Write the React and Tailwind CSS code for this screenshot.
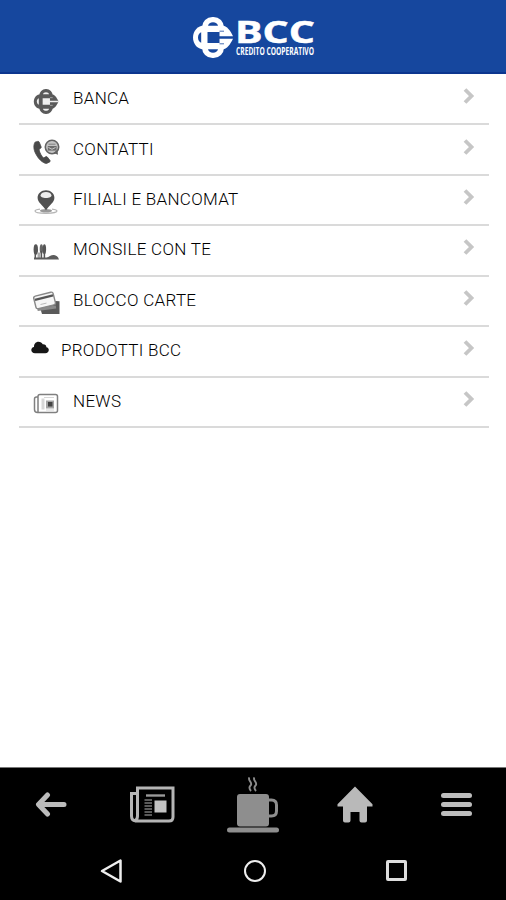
import React from 'react';

// Four-lobed knot, the right lobe is cut open like a "C"
const Knot = ({ className, color, gap }) => (
  <svg className={className} viewBox="0 0 40 41" fill="none">
    <rect x="9" y="0" width="22" height="41" rx="10.500" fill={color} />
    <path d="M11 8.500h18c5 0 8.500 5.500 11 10.700v2.600c-2.500 5.200-6 10.700-11 10.700H11c-6 0-11-5-11-12s5-12 11-12z" fill={color} />
    {/* holes of the lobes */}
    <path d="M15 8.800c.5-2.300 2.400-3.500 5-3.500s4.500 1.200 5 3.500z" fill={gap} />
    <path d="M15 32.200c.5 2.300 2.400 3.500 5 3.500s4.500-1.200 5-3.500z" fill={gap} />
    <path d="M8.200 15.300C6.200 16 5 18 5 20.500s1.200 4.500 3.200 5.200z" fill={gap} />
    <path d="M26.500 14.200h4.500M26.500 26.800h4.500" stroke={gap} strokeWidth=".8" />
    <path d="M14.500 15h12v4.300h13.500v2.400H26.500V26h-12z" fill={gap} />
  </svg>
);

const PhoneIcon = () => (
  <svg width="27" height="26" viewBox="0 0 27 26" fill="none">
    <path
      d="M4.600 2.400 2 3.200C.4 6 .3 10.400 3 15.200c2.600 4.800 6.200 8.600 10.500 9.300l3.200-1.600c.6-.4.6-1 .2-1.600l-2.600-3.300c-.5-.6-1.100-.6-1.700-.2l-1.900 1.200C8.700 17.400 6.700 14 6 10.600l1.600-1.300c.6-.5.700-.9.500-1.600L6.200 3.100c-.3-.7-.9-.9-1.600-.7z"
      fill="#4a4a4a"
      stroke="#4a4a4a"
      strokeWidth=".8"
    />
    <circle cx="19" cy="8" r="6.700" fill="#c4c4c4" stroke="#636363" strokeWidth="1.600" />
    <path d="M14.800 7h8.800v4.600h-8.800z" fill="#6c6c6c" />
    <path d="M15.500 5.200h7M15 8l4 2 4-2" stroke="#777" strokeWidth=".9" />
    <path d="m15.500 8.500 3.500 1.800 3.500-1.800" stroke="#ddd" strokeWidth=".8" />
    <path d="m20.500 14 4.500 1.800-.6-5z" fill="#636363" />
  </svg>
);

const PinIcon = () => (
  <svg width="26" height="26" viewBox="0 0 26 26" fill="none">
    <path d="M7 20.200c-3 .4-5 1-5 1.800 0 1.300 4.900 2.300 11 2.300s11-1 11-2.300c0-.8-2-1.400-5-1.800" stroke="#b5b5b5" strokeWidth="1.200" />
    <ellipse cx="13" cy="21.700" rx="6" ry="1.700" fill="#999" />
    <path d="M13 1.200c-4.700 0-8.400 3.300-8.400 7.500 0 4.500 5 7.600 8.400 12.500 3.400-4.900 8.400-8 8.400-12.500 0-4.200-3.700-7.500-8.400-7.500z" fill="#515151" />
    <path d="M7.500 6.200c.7-2 2.700-3.200 5.500-3.200s4.800 1.200 5.500 3.200c.3 1.600-2.200 2.800-5.500 2.800S7.200 7.800 7.500 6.200z" fill="#eee" />
  </svg>
);

const TreesIcon = () => (
  <svg width="26" height="20" viewBox="0 0 26 20" fill="none">
    <ellipse cx="2.800" cy="7.500" rx="2.200" ry="5.300" fill="#555" />
    <ellipse cx="8.400" cy="7" rx="1.700" ry="4.800" fill="#666" />
    <ellipse cx="11.400" cy="7.200" rx="1.700" ry="5" fill="#555" />
    <path d="M2.300 8v9M8.400 9v8M11.400 9v8" stroke="#555" strokeWidth="1.500" />
    <path d="M4.500 10.500h3v6h-3z" fill="#aaa" />
    <path d="M1 15.500h12.500c2.500-.4 4.500-2.700 7.500-2.500 2.300.2 4 1.600 5 4.500H1z" fill="#5c5c5c" />
  </svg>
);

const CardsIcon = () => (
  <svg width="27" height="26" viewBox="0 0 27 26" fill="none">
    <path d="M7 17.500 22.500 11l4 .3v12.700H9z" fill="#5a5a5a" />
    <path d="m4.500 19.500 18.500-2.500" stroke="#8a8a8a" strokeWidth="3" />
    <rect x="1.700" y="4" width="20" height="13" rx="2" transform="rotate(-14 11.500 11)" fill="#f6f6f6" stroke="#888" strokeWidth="1.400" />
    <path d="m2 9.900 18-4.500" stroke="#555" strokeWidth="2.200" />
    <path d="m7.500 14.500 6-1.400" stroke="#bbb" strokeWidth="1" />
  </svg>
);

const CloudIcon = () => (
  <svg width="18" height="13" viewBox="0 0 18 13">
    <path d="M4 12.300c-2.200 0-3.700-1.300-3.700-3.200 0-1.700 1.100-2.800 2.700-3.100C2.900 2.800 4.800.7 7.500.7c2 0 3.500 1 4.200 2.600 2.200-.2 3.700 1.100 3.700 3 1.500.3 2.400 1.300 2.400 2.800 0 1.900-1.400 3.200-3.500 3.200z" fill="#161616" />
  </svg>
);

const SmallNewsIcon = () => (
  <svg width="26" height="21" viewBox="0 0 26 21" fill="none">
    <path d="M5 4H3.500Q1.500 4 1.500 6v10.500q0 3 3 3h18q2 0 2-2v-14q0-2-2-2H7q-2 0-2 2v16" stroke="#808080" strokeWidth="1.500" />
    <path d="M8.500 5.500h3v11h-3z" fill="#d8d8d8" />
    <path d="M13 7.500h8v8h-8z" fill="#a5a5a5" />
    <path d="M15 9h4.500v4.500H15z" fill="#444" />
    <path d="M11 4.500h10M13 17h8" stroke="#ccc" strokeWidth=".8" />
  </svg>
);

const menuItems = [
  { label: 'BANCA', icon: <Knot className="h-[25px] w-[26px]" color="#5a5a5a" gap="#f0f0f0" /> },
  { label: 'CONTATTI', icon: <PhoneIcon /> },
  { label: 'FILIALI E BANCOMAT', icon: <PinIcon /> },
  { label: 'MONSILE CON TE', icon: <TreesIcon /> },
  { label: 'BLOCCO CARTE', icon: <CardsIcon /> },
  { label: 'PRODOTTI BCC', icon: <CloudIcon />, small: true },
  { label: 'NEWS', icon: <SmallNewsIcon /> },
];

const MenuRow = ({ item }) => (
  <li className="flex h-[50.43px] items-center border-b-2 border-[#dadada]">
    <div className={item.small ? '-mt-2 ml-3 w-[30px]' : 'mt-1 ml-3.5 w-10'}>{item.icon}</div>
    <span className="-mt-0.5 flex-1 text-[17px] leading-6 font-light tracking-[0.3px] text-black">{item.label}</span>
    <svg className="mr-[14px] mb-1.5" width="12" height="18" viewBox="0 0 12 18" fill="none">
      <path d="m2 2.500 6.500 6.500L2 15.500" stroke="#c6c6c6" strokeWidth="3.800" />
    </svg>
  </li>
);

const Header = () => (
  <header className="flex h-[74px] justify-center border-b-2 border-[#0c368f] bg-[#16479e] pt-[17px] pl-0.5">
    <Knot className="h-[41px] w-10" color="#fff" gap="#16479e" />
    <svg className="ml-[3px] overflow-visible" width="80" height="48" viewBox="0 0 80 48" fill="#fff">
      <text x="-1" y="25.500" fontFamily="Open Sans, sans-serif" fontWeight="700" fontSize="31" stroke="#fff" strokeWidth=".5" textLength="80" lengthAdjust="spacingAndGlyphs">BCC</text>
      <text x="0" y="38.300" fontFamily="Open Sans, sans-serif" fontWeight="700" fontSize="11" textLength="78" lengthAdjust="spacingAndGlyphs">CREDITO COOPERATIVO</text>
    </svg>
  </header>
);

const TabBar = () => (
  <nav className="grid h-[73px] grid-cols-5">
    <div className="flex items-center justify-center">
      <svg width="32" height="25" viewBox="0 0 32 25" fill="none" stroke="#bcbcbc" strokeWidth="5" strokeLinecap="round" strokeLinejoin="round">
        <path d="M12.500 3 3.500 12.500l9 9.500M4.500 12.500h24.500" />
      </svg>
    </div>
    <div className="flex items-center justify-center pl-px">
      <svg width="46" height="37" viewBox="0 0 46 37" fill="none">
        <path d="M7.500 7.500H2.500V30q0 5 5 5h32.500q4 0 4-4V2H8.500v28q0 4-3 5" stroke="#b5b5b5" strokeWidth="3" />
        <path d="M17 9.500h19" stroke="#999" strokeWidth="2.400" />
        <path d="M15.500 14H23M15.500 17H23M15.500 20H23M15.500 23H23M15.500 26H23M15.500 29H23" stroke="#777" strokeWidth="1.600" />
        <path d="M25.500 14.500h12v12h-12z" fill="#c2c2c2" />
      </svg>
    </div>
    <div className="flex items-center justify-center pl-px">
      <svg width="54" height="56" viewBox="0 0 54 56" fill="none">
        <path d="M23.500.5c-2.500 3 4 5 1 8-1.500 1.600-1.300 3.500.5 5.500M28.500.5c-2.500 3 4 5 1 8-1.500 1.600-1.300 3.500.5 5.500" stroke="#8c8c8c" strokeWidth="1.900" />
        <rect x="11" y="17" width="32" height="32.500" rx="3" fill="#8e8e8e" />
        <path d="M42 23h3.500q5 0 5 5v6q0 5-5 5H42" stroke="#8e8e8e" strokeWidth="3" />
        <rect x="1" y="50.500" width="52" height="5" rx="2.500" fill="#8e8e8e" />
      </svg>
    </div>
    <div className="flex items-center justify-center pl-0.5">
      <svg width="36" height="37" viewBox="0 0 36 37">
        <path d="M18 .5 35.500 18.300v2.200H30v14q0 2-2 2h-3.500q-2 0-2-2V26h-9v8.500q0 2-2 2H8q-2 0-2-2v-14H.5v-2.200z" fill="#b9b9b9" />
      </svg>
    </div>
    <div className="flex items-center justify-center pl-0.5">
      <div className="space-y-1">
        <div className="h-[5px] w-[31px] rounded-full bg-[#bdbdbd]" />
        <div className="h-[5px] w-[31px] rounded-full bg-[#bdbdbd]" />
        <div className="h-[5px] w-[31px] rounded-full bg-[#bdbdbd]" />
      </div>
    </div>
  </nav>
);

// Android soft keys
const SystemBar = () => (
  <div className="flex h-[59px] items-center justify-between pr-[99px] pl-[100px]">
    <svg width="23" height="26" viewBox="0 0 23 26" fill="none">
      <path d="M2 13 20.500 2.500v21z" stroke="#eee" strokeWidth="2.500" strokeLinejoin="round" />
    </svg>
    <div className="h-[22px] w-[22px] rounded-full border-[2.500px] border-[#eee]" />
    <div className="h-[21px] w-[21px] rounded-xs border-[3px] border-[#ddd]" />
  </div>
);

export default function App() {
  return (
    <div className="flex h-[900px] w-[506px] flex-col overflow-hidden bg-white font-['Roboto',sans-serif]">
      <Header />
      <ul className="flex-1 pt-px pr-[17px] pl-[19px]">
        {menuItems.map((item) => (
          <MenuRow key={item.label} item={item} />
        ))}
      </ul>
      <footer className="border-t border-[#777] bg-black">
        <TabBar />
        <SystemBar />
      </footer>
    </div>
  );
}
